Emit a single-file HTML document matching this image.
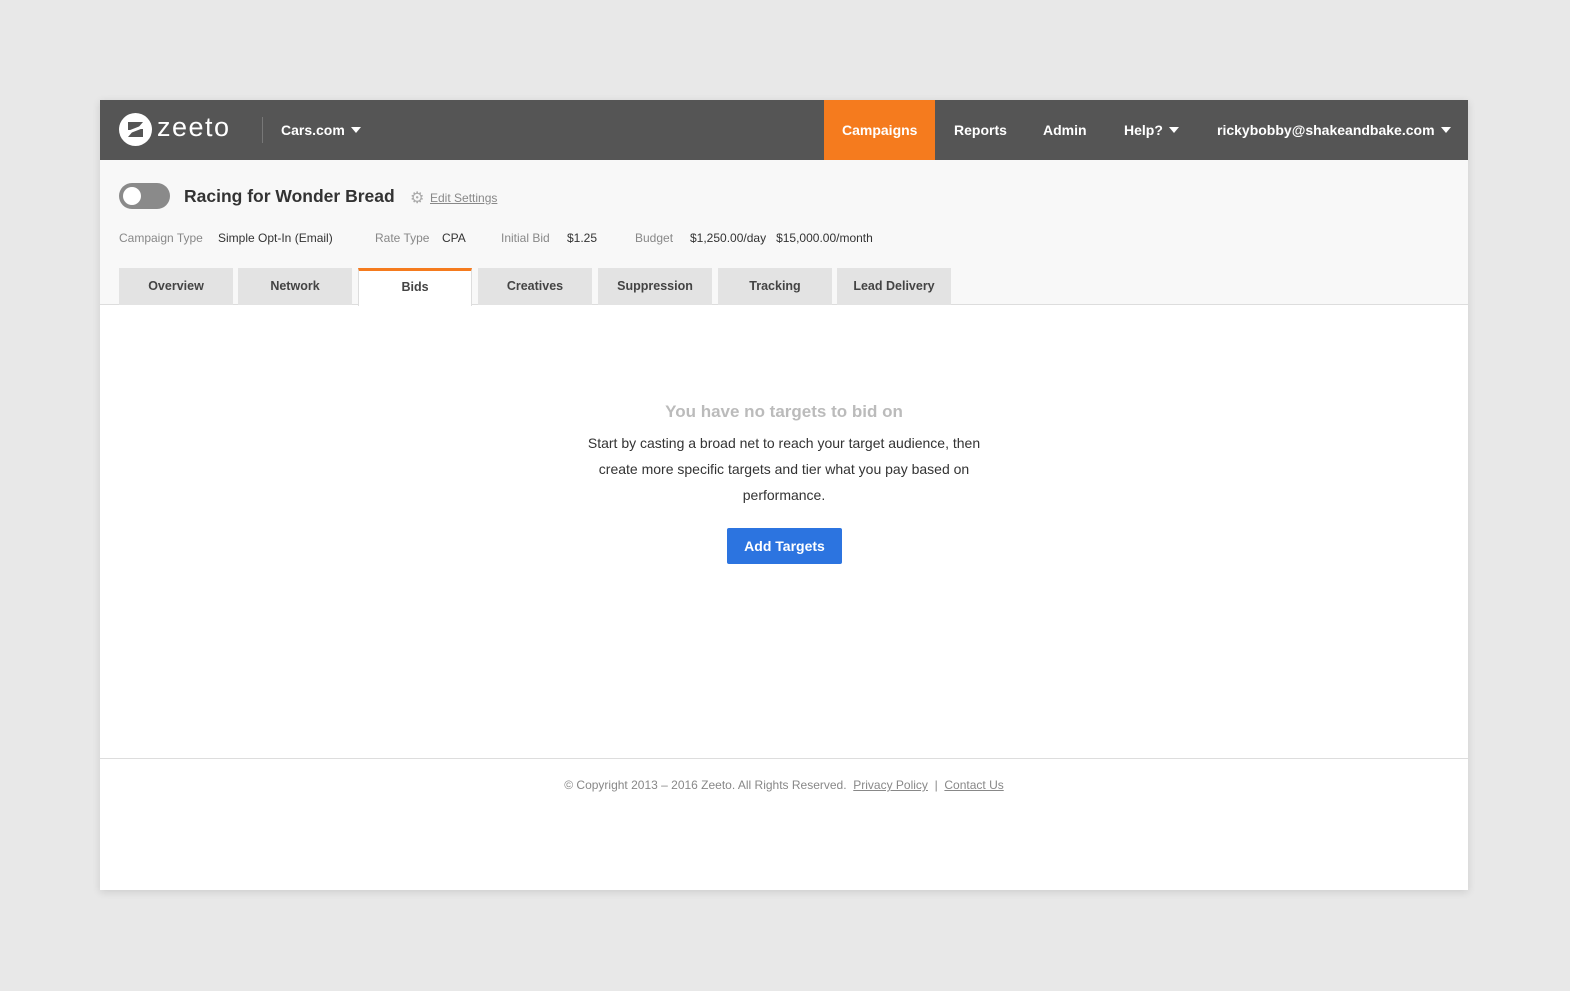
<!DOCTYPE html><html><head><style>
*{margin:0;padding:0;box-sizing:border-box}
html,body{overflow:hidden}
body{width:1570px;height:991px;background:#e8e8e8;font-family:"Liberation Sans",sans-serif;position:relative}
.a{position:absolute;white-space:nowrap}
.card{position:absolute;left:100px;top:100px;width:1368px;height:790px;background:#fff;box-shadow:0 2px 8px rgba(0,0,0,.12)}
.hdr{position:absolute;left:0;top:0;width:1368px;height:60px;background:#555}
.nav{color:#fff;font-size:14px;font-weight:bold;top:22px}
.sub{position:absolute;left:0;top:60px;width:1368px;height:145px;background:#f8f8f8;border-bottom:1px solid #ddd}
.tab{position:absolute;top:168px;width:114px;height:37px;background:#e3e3e3;text-align:center;font-size:12.5px;font-weight:bold;color:#444;line-height:37px}
.lbl{color:#888;font-size:12px;top:131px}
.val{color:#333;font-size:12px;top:131px}
.tri{display:inline-block;width:0;height:0;border-left:5px solid transparent;border-right:5px solid transparent;border-top:6px solid #fff;vertical-align:2px;margin-left:6px}
</style></head><body>
<div class="card">
<div class="hdr">
<svg class="a" style="left:19px;top:13px" width="33" height="33" viewBox="0 0 33 33"><circle cx="16.5" cy="16.5" r="16.5" fill="#fff"/><path d="M9 9h15l-6 7h6v8H9l6-7H9z" fill="#555"/><path d="M5 21L28 12" stroke="#fff" stroke-width="3"/></svg>
<div class="a" style="left:57px;top:12px;color:#fff;font-size:27px;letter-spacing:1.5px">zeeto</div>
<div class="a" style="left:162px;top:17px;width:1px;height:26px;background:#777"></div>
<div class="a nav" style="left:181px">Cars.com<span class="tri"></span></div>
<div class="a" style="left:724px;top:0;width:111px;height:60px;background:#f57b1e"></div>
<div class="a nav" style="left:742px">Campaigns</div>
<div class="a nav" style="left:854px">Reports</div>
<div class="a nav" style="left:943px">Admin</div>
<div class="a nav" style="left:1024px">Help?<span class="tri"></span></div>
<div class="a nav" style="left:1117px">rickybobby@shakeandbake.com<span class="tri"></span></div>
</div>
<div class="sub"></div>
<div class="a" style="left:19px;top:83px;width:51px;height:26px;border-radius:13px;background:#8a8a8a"></div>
<div class="a" style="left:23px;top:87px;width:18px;height:18px;border-radius:9px;background:#fff"></div>
<div class="a" style="left:84px;top:86px;font-size:17.5px;font-weight:bold;color:#333">Racing for Wonder Bread</div>
<div class="a" style="left:310px;top:88px;font-size:16px;color:#aaa">⚙</div>
<div class="a" style="left:330px;top:91px;font-size:12px;color:#888;text-decoration:underline">Edit Settings</div>
<div class="a lbl" style="left:19px">Campaign Type</div><div class="a val" style="left:118px">Simple Opt-In (Email)</div>
<div class="a lbl" style="left:275px">Rate Type</div><div class="a val" style="left:342px">CPA</div>
<div class="a lbl" style="left:401px">Initial Bid</div><div class="a val" style="left:467px">$1.25</div>
<div class="a lbl" style="left:535px">Budget</div><div class="a val" style="left:590px">$1,250.00/day &nbsp; $15,000.00/month</div>
<div class="tab" style="left:19px">Overview</div>
<div class="tab" style="left:138px">Network</div>
<div class="tab" style="left:258px;background:#fff;border-top:3px solid #f57b1e;border-left:1px solid #ddd;border-right:1px solid #ddd;height:38px;line-height:33px">Bids</div>
<div class="tab" style="left:378px">Creatives</div>
<div class="tab" style="left:498px">Suppression</div>
<div class="tab" style="left:618px">Tracking</div>
<div class="tab" style="left:737px">Lead Delivery</div>
<div class="a" style="left:0;width:1368px;text-align:center;top:302px;font-size:17px;font-weight:bold;color:#bbb">You have no targets to bid on</div>
<div class="a" style="left:484px;width:400px;text-align:center;top:330px;font-size:14px;line-height:26px;color:#333;white-space:normal">Start by casting a broad net to reach your target audience, then create more specific targets and tier what you pay based on performance.</div>
<div class="a" style="left:627px;top:428px;width:115px;height:36px;background:#2c74e0;border-radius:2px;color:#fff;font-size:14px;font-weight:bold;text-align:center;line-height:36px">Add Targets</div>
<div class="a" style="left:0;top:658px;width:1368px;height:1px;background:#ddd"></div>
<div class="a" style="left:0;width:1368px;text-align:center;top:678px;font-size:12px;color:#888">© Copyright 2013 – 2016 Zeeto. All Rights Reserved. &nbsp;<u>Privacy Policy</u> &nbsp;| &nbsp;<u>Contact Us</u></div>
</div>
</body></html>
